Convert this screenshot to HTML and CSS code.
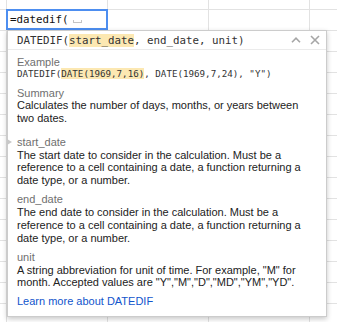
FILE: index.html
```html
<!DOCTYPE html>
<html lang="en">

<head>
  <meta charset="UTF-8">
  <meta name="viewport" content="width=device-width, initial-scale=1.0">
  <title>DATEDIF | Sheet</title>
  <link rel="stylesheet" href="styles.css">
</head>

<body>

  <div class="sheet">
    <div class="editor">
      <span class="formula">=datedif(</span><span class="space-mark"></span>
    </div>

    <div class="popup">
      <div class="popup-head">
        <span class="signature">DATEDIF(<span class="hl">start_date</span>, end_date, unit)</span>
        <span class="head-icons">
          <svg class="icon" width="10" height="6" viewBox="0 0 10 6">
            <polyline points="1,5.2 5,1.2 9,5.2" fill="none" stroke="#a6a6a6" stroke-width="1.6" />
          </svg>
          <svg class="icon" width="10" height="10" viewBox="0 0 10 10">
            <path d="M1 1L9 9M9 1L1 9" fill="none" stroke="#a6a6a6" stroke-width="1.6" />
          </svg>
        </span>
      </div>

      <div class="popup-body">
        <div class="section">
          <div class="label">Example</div>
          <div class="code">DATEDIF(<span class="hl">DATE(1969,7,16)</span>, DATE(1969,7,24), "Y")</div>
        </div>

        <div class="section summary">
          <div class="label">Summary</div>
          <div class="desc">Calculates the number of days, months, or years between two dates.</div>
        </div>

        <div class="section param active">
          <div class="label">start_date</div>
          <div class="desc">The start date to consider in the calculation. Must be a reference to a cell containing a date, a function returning a date type, or a number.</div>
        </div>

        <div class="section param">
          <div class="label">end_date</div>
          <div class="desc">The end date to consider in the calculation. Must be a reference to a cell containing a date, a function returning a date type, or a number.</div>
        </div>

        <div class="section param">
          <div class="label">unit</div>
          <div class="desc">A string abbreviation for unit of time. For example, "M" for month. Accepted values are "Y","M","D","MD","YM","YD".</div>
        </div>

        <a class="learn" href="#">Learn more about DATEDIF</a>
      </div>
    </div>
  </div>

</body>

</html>
```

FILE: styles.css
```css
* {
  box-sizing: border-box;
}

body {
  margin: 0;
  background: #fff;
  font-family: "Liberation Sans", Arial, sans-serif;
  color: #222;
}

.sheet {
  position: relative;
  width: 337px;
  height: 322px;
  overflow: hidden;
  background-image:
    linear-gradient(to right, #e2e2e2 1px, transparent 1px),
    linear-gradient(to bottom, #e2e2e2 1px, transparent 1px);
  background-size: 101px 100%, 100% 21px;
  background-position: 107px 0, 0 9px;
}

/* cell editor */
.editor {
  position: absolute;
  left: 6px;
  top: 9px;
  width: 102px;
  height: 21px;
  padding: 0 2px;
  border: 2px solid #4d8ef0;
  background: #fff;
  font-family: "DejaVu Sans Mono", monospace;
  font-size: 10.8px;
  line-height: 17px;
  color: #111;
  white-space: nowrap;
}

.space-mark {
  display: inline-block;
  width: 9px;
  height: 3px;
  margin-left: 4px;
  border: 1px solid #c4c4c4;
  border-top: none;
}

/* help popup */
.popup {
  position: absolute;
  left: 7px;
  top: 30px;
  width: 320px;
  background: #fff;
  border: 1px solid rgba(0, 0, 0, .2);
  box-shadow: 0 2px 5px rgba(0, 0, 0, .22);
}

.popup-head {
  display: flex;
  align-items: center;
  justify-content: space-between;
  height: 19px;
  padding: 0 6px 0 9px;
  border-bottom: 1px solid #ebebeb;
}

.signature {
  font-family: "DejaVu Sans Mono", monospace;
  font-size: 10.8px;
  color: #333;
  white-space: nowrap;
}

.hl {
  background: #fce8b2;
}

.head-icons {
  display: flex;
  align-items: center;
  gap: 9px;
}

.icon {
  display: block;
}

.popup-body {
  padding: 6px 12px 8px 9px;
  font-size: 11px;
  line-height: 12.7px;
}

.section {
  position: relative;
}

.label {
  color: #6f6f6f;
}

.code {
  font-family: "DejaVu Sans Mono", monospace;
  font-size: 9.2px;
  line-height: 10px;
  color: #333;
  white-space: nowrap;
}

.summary {
  margin-top: 8px;
}

.param {
  margin-top: 6.8px;
}

.param.active {
  margin-top: 11px;
}

.param.active::before {
  content: "";
  position: absolute;
  left: -10px;
  top: 3px;
  border-left: 5px solid #c8c8c8;
  border-top: 3px solid transparent;
  border-bottom: 3px solid transparent;
}

.learn {
  display: block;
  margin-top: 6px;
  color: #1155cc;
  text-decoration: none;
}
```
